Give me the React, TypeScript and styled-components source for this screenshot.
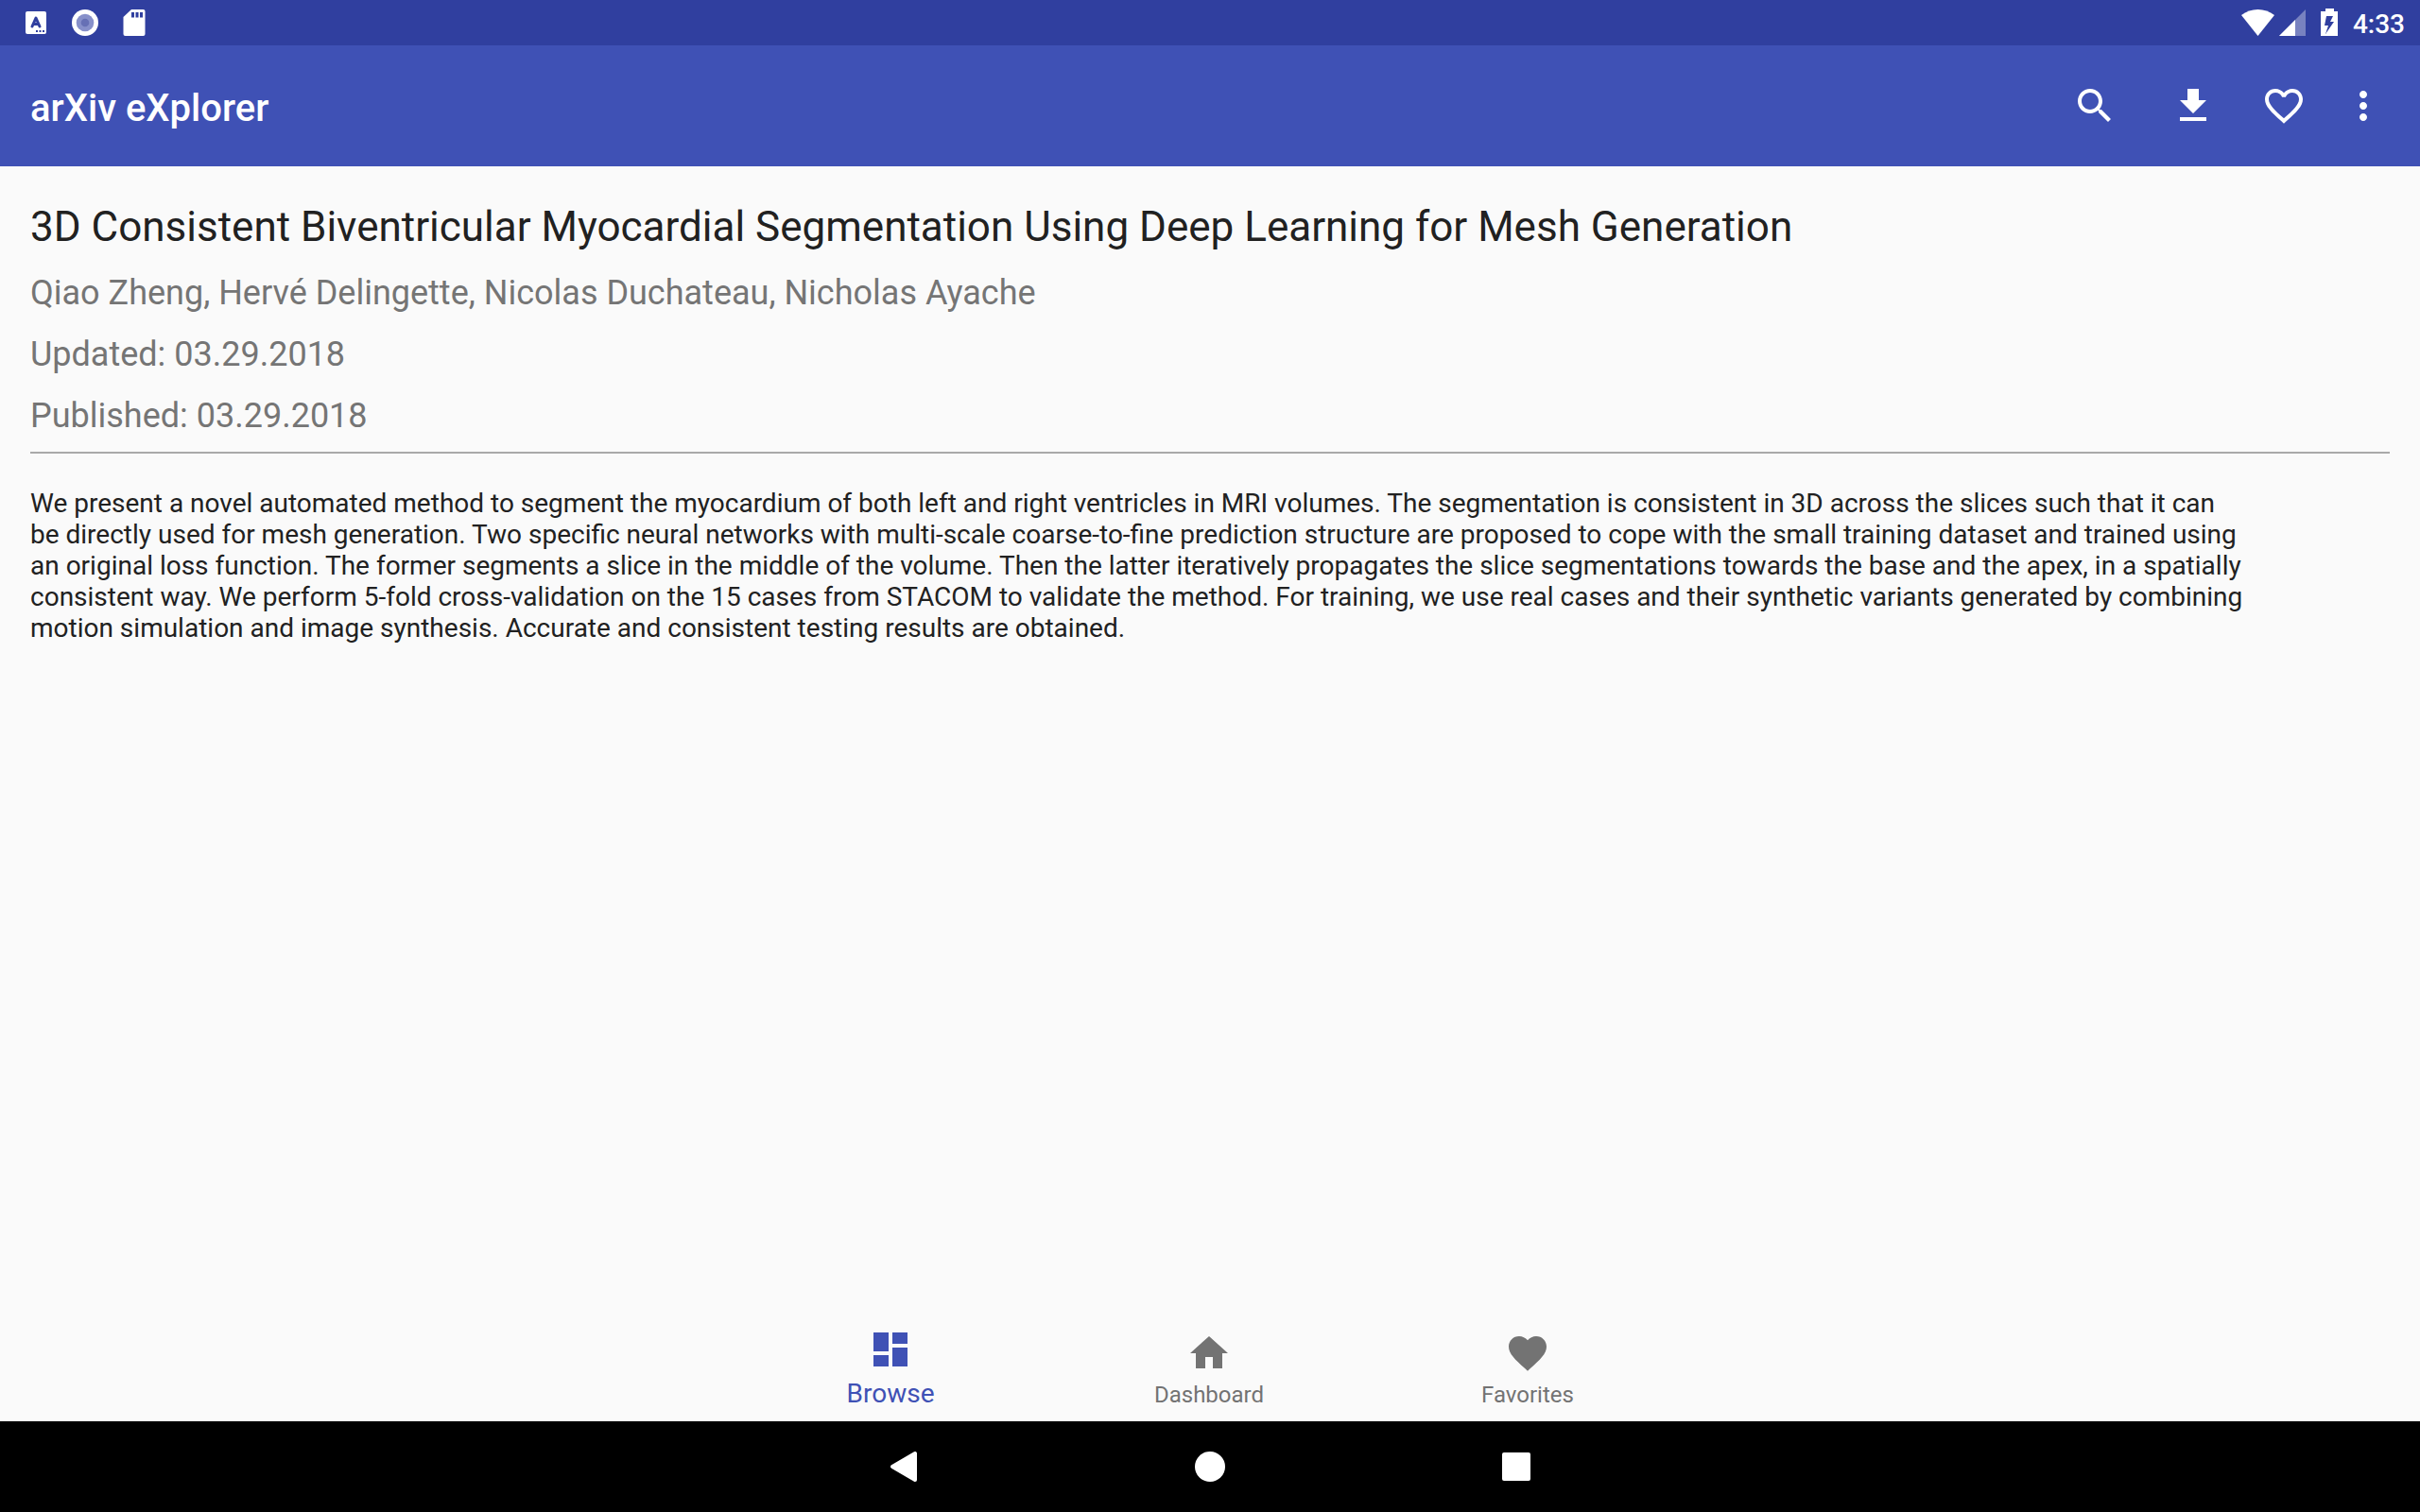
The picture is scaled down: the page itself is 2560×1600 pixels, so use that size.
import React from "react";
import styled, { createGlobalStyle } from "styled-components";

const Global = createGlobalStyle`
  *, *::before, *::after { box-sizing: border-box; }
  body {
    margin: 0;
    background: #fafafa;
    font-family: Roboto, "Noto Sans", sans-serif;
    color: #212121;
  }
  h1, h2, p { margin: 0; font-weight: 400; }
  button { border: 0; padding: 0; background: none; color: inherit; font: inherit; cursor: pointer; }
  svg { display: block; }
`;

const Screen = styled.div`
  display: flex;
  flex-direction: column;
  min-height: 100vh;
`;

const StatusBar = styled.div`
  display: flex;
  justify-content: space-between;
  height: 48px;
  padding: 0 16px 0 20px;
  background: #303f9f;
  color: #fff;
`;

const StatusGroup = styled.div`
  display: flex;
  align-items: center;
  gap: 16px;
`;

const Clock = styled.time`
  padding-top: 4px;
  font-size: 28px;
  line-height: 32px;
  font-weight: 500;
`;

const AppBar = styled.header`
  display: flex;
  align-items: center;
  justify-content: space-between;
  height: 128px;
  padding: 0 24px 0 32px;
  background: #3f51b5;
  color: #fff;
`;

const AppName = styled.h1`
  padding-top: 6px;
  font-size: 40px;
  line-height: 48px;
  && { font-weight: 500; }
`;

const Actions = styled.div`
  display: flex;
  align-items: center;
`;

const ActionButton = styled.button<{ $width?: number; $gap?: number }>`
  display: flex;
  align-items: center;
  justify-content: center;
  width: ${(p) => p.$width ?? 96}px;
  height: 96px;
  margin-right: ${(p) => p.$gap ?? 0}px;
`;

const Article = styled.main`
  flex: 1;
  padding: 35px 32px 32px;
`;

const Head = styled.header`
  display: flex;
  flex-direction: column;
  gap: 16px;
  padding-bottom: 13px;
  border-bottom: 2px solid #a9a9a9;
`;

const PaperTitle = styled.h2`
  font-size: 44px;
  line-height: 59px;
`;

const Meta = styled.p`
  font-size: 36px;
  line-height: 49px;
  color: #757575;
`;

const Abstract = styled.p`
  padding: 36px 152px 0 0;
  font-size: 28px;
  line-height: 33px;
`;

const Tabs = styled.nav`
  display: flex;
  justify-content: center;
  height: 112px;
  padding-right: 2px;
`;

const Tab = styled.button<{ $active?: boolean }>`
  display: flex;
  flex-direction: column;
  align-items: center;
  justify-content: space-between;
  width: 337px;
  && {
    padding: ${(p) => (p.$active ? "12px 0 13px" : "16px 0 12px")};
    color: ${(p) => (p.$active ? "#3f51b5" : "#737373")};
  }
`;

const TabLabel = styled.span<{ $active?: boolean }>`
  font-size: ${(p) => (p.$active ? 28 : 24)}px;
  line-height: 32px;
`;

const SystemBar = styled.div`
  display: flex;
  justify-content: center;
  height: 96px;
  background: #000;
  color: #fff;
`;

const SystemButton = styled.button`
  display: flex;
  align-items: center;
  justify-content: center;
  width: 324px;
`;

const Icon = ({ d, size = 48 }: { d: string; size?: number }) => (
  <svg width={size} height={size} viewBox="0 0 24 24" fill="currentColor" aria-hidden="true">
    <path d={d} />
  </svg>
);

const icons = {
  search:
    "M15.5 14h-.79l-.28-.27C15.41 12.59 16 11.11 16 9.5 16 5.91 13.09 3 9.5 3S3 5.91 3 9.5 5.91 16 9.5 16c1.61 0 3.09-.59 4.23-1.57l.27.28v.79l5 4.99L20.49 19l-4.99-5zm-6 0C7.01 14 5 11.99 5 9.5S7.01 5 9.5 5 14 7.01 14 9.5 11.99 14 9.5 14z",
  download: "M19 9h-4V3H9v6H5l7 7 7-7zM5 18v2h14v-2H5z",
  heartOutline:
    "M16.5 3c-1.74 0-3.41.81-4.5 2.09C10.91 3.81 9.24 3 7.5 3 4.42 3 2 5.42 2 8.5c0 3.78 3.4 6.86 8.55 11.54L12 21.35l1.45-1.32C18.6 15.36 22 12.28 22 8.5 22 5.42 19.58 3 16.5 3zm-4.4 15.55l-.1.1-.1-.1C7.14 14.24 4 11.39 4 8.5 4 6.5 5.5 5 7.5 5c1.54 0 3.04.99 3.57 2.36h1.87C13.46 5.99 14.96 5 16.5 5c2 0 3.5 1.5 3.5 3.5 0 2.89-3.14 5.74-7.9 10.05z",
  more: "M12 8c1.1 0 2-.9 2-2s-.9-2-2-2-2 .9-2 2 .9 2 2 2zm0 2c-1.1 0-2 .9-2 2s.9 2 2 2 2-.9 2-2-.9-2-2-2zm0 6c-1.1 0-2 .9-2 2s.9 2 2 2 2-.9 2-2-.9-2-2-2z",
  browse: "M3 13h8V3H3v10zm0 8h8v-6H3v6zm10 0h8V11h-8v10zm0-18v6h8V3h-8z",
  home: "M10 20v-6h4v6h5v-8h3L12 3 2 12h3v8z",
  heart:
    "M12 21.35l-1.45-1.32C5.4 15.36 2 12.28 2 8.5 2 5.42 4.42 3 7.5 3c1.74 0 3.41.81 4.5 2.09C13.09 3.81 14.76 3 16.5 3 19.58 3 22 5.42 22 8.5c0 3.78-3.4 6.86-8.55 11.54L12 21.35z",
};

const tabs = [
  { label: "Browse", icon: icons.browse, active: true },
  { label: "Dashboard", icon: icons.home },
  { label: "Favorites", icon: icons.heart },
];

export default function App() {
  return (
    <Screen>
      <Global />
      <StatusBar>
        <StatusGroup>
          <svg width="36" height="36" viewBox="0 0 36 36" aria-hidden="true">
            <rect x="7" y="6" width="22" height="24" rx="2" fill="#fff" />
            <path d="M14 22l4-9 4 9M15.5 19.5h5" fill="none" stroke="#303f9f" strokeWidth="3" strokeLinecap="round" strokeLinejoin="round" />
            <path d="M18 26h2v2h-2zM21.5 26h2v2h-2zM25 26h2v2h-2z" fill="#303f9f" />
          </svg>
          <svg width="36" height="36" viewBox="0 0 36 36" aria-hidden="true">
            <circle cx="18" cy="18" r="14" fill="#fff" />
            <circle cx="18" cy="18" r="9.3" fill="#8790ca" />
            <circle cx="18" cy="18" r="4.3" fill="#6670b5" />
          </svg>
          <svg width="36" height="36" viewBox="0 0 36 36" aria-hidden="true">
            <path d="M15 4h12.5a2 2 0 0 1 2 2v24a2 2 0 0 1-2 2h-19a2 2 0 0 1-2-2V12z" fill="#fff" />
            <path d="M15 7h3v5.5h-3zM19.5 7h3v5.5h-3zM24 7h3v5.5h-3z" fill="#303f9f" />
          </svg>
        </StatusGroup>
        <StatusGroup>
          <svg width="102" height="30" viewBox="0 0 102 30" fill="#fff" aria-hidden="true">
            <path d="M0 7C10-1 25-1 35 7L17.5 29z" />
            <path d="M68 1v28H40z" opacity=".35" />
            <path d="M57 12v17H40z" />
            <path fillRule="evenodd" d="M90 0h9v3h5v26H85V3h5zM91 8l-2 10h4l-3 9 9-13h-4l3-6z" transform="translate(-1 0)" />
          </svg>
          <Clock>4:33</Clock>
        </StatusGroup>
      </StatusBar>
      <AppBar>
        <AppName>arXiv eXplorer</AppName>
        <Actions>
          <ActionButton aria-label="Search" $gap={8}><Icon d={icons.search} /></ActionButton>
          <ActionButton aria-label="Download"><Icon d={icons.download} /></ActionButton>
          <ActionButton aria-label="Add to favorites"><Icon d={icons.heartOutline} /></ActionButton>
          <ActionButton aria-label="More options" $width={72}><Icon d={icons.more} /></ActionButton>
        </Actions>
      </AppBar>
      <Article>
        <Head>
          <PaperTitle>3D Consistent Biventricular Myocardial Segmentation Using Deep Learning for Mesh Generation</PaperTitle>
          <Meta>Qiao Zheng, Hervé Delingette, Nicolas Duchateau, Nicholas Ayache</Meta>
          <Meta>Updated: 03.29.2018</Meta>
          <Meta>Published: 03.29.2018</Meta>
        </Head>
        <Abstract>
          We present a novel automated method to segment the myocardium of both left and right ventricles in MRI
          volumes. The segmentation is consistent in 3D across the slices such that it can be directly used for mesh
          generation. Two specific neural networks with multi-scale coarse-to-fine prediction structure are proposed to
          cope with the small training dataset and trained using an original loss function. The former segments a slice
          in the middle of the volume. Then the latter iteratively propagates the slice segmentations towards the base
          and the apex, in a spatially consistent way. We perform 5-fold cross-validation on the 15 cases from STACOM
          to validate the method. For training, we use real cases and their synthetic variants generated by combining
          motion simulation and image synthesis. Accurate and consistent testing results are obtained.
        </Abstract>
      </Article>
      <Tabs>
        {tabs.map((t) => (
          <Tab key={t.label} $active={t.active}>
            <Icon d={t.icon} />
            <TabLabel $active={t.active}>{t.label}</TabLabel>
          </Tab>
        ))}
      </Tabs>
      <SystemBar>
        <SystemButton aria-label="Back">
          <svg width="36" height="36" viewBox="0 0 36 36" aria-hidden="true">
            <path d="M30 4v28L6 18z" fill="#fff" stroke="#fff" strokeWidth="4" strokeLinejoin="round" />
          </svg>
        </SystemButton>
        <SystemButton aria-label="Home">
          <svg width="36" height="36" viewBox="0 0 36 36" fill="#fff" aria-hidden="true"><circle cx="18" cy="18" r="16" /></svg>
        </SystemButton>
        <SystemButton aria-label="Recent apps">
          <svg width="36" height="36" viewBox="0 0 36 36" fill="#fff" aria-hidden="true"><rect x="3" y="3" width="30" height="30" rx="2" /></svg>
        </SystemButton>
      </SystemBar>
    </Screen>
  );
}
